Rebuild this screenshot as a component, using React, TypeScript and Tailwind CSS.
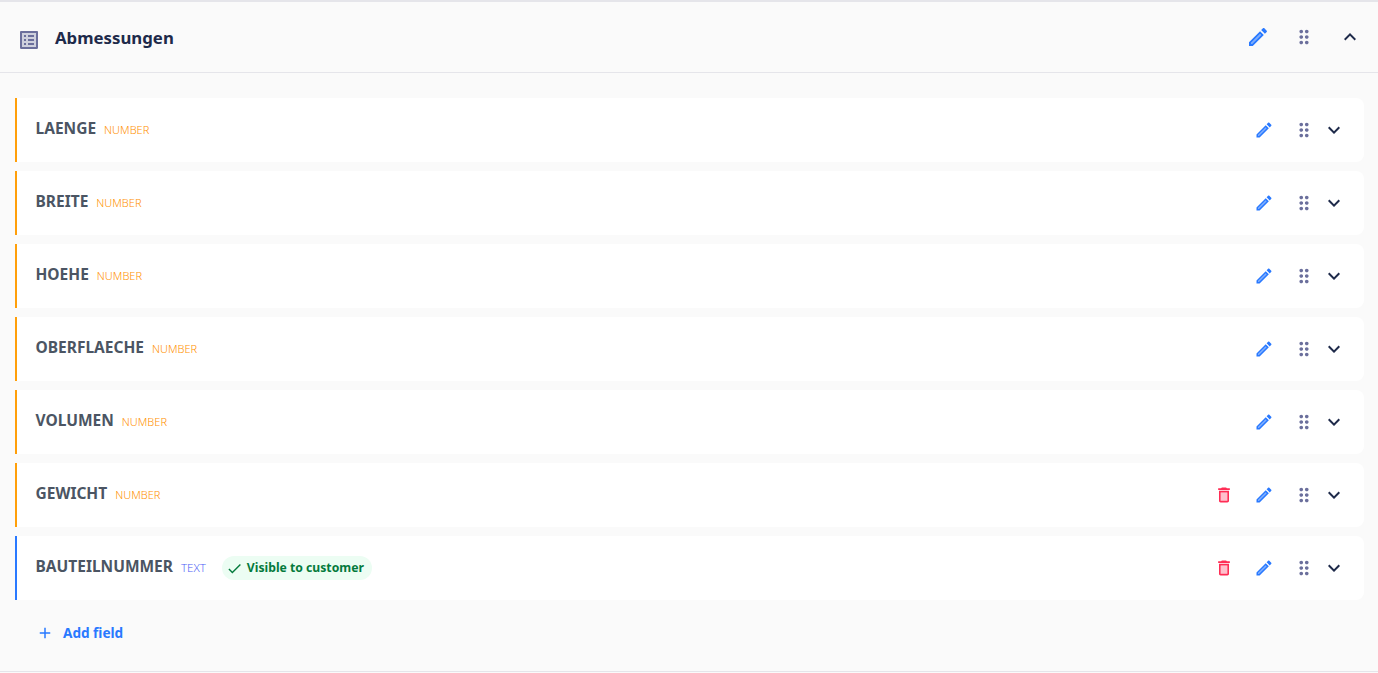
import { MdKeyboardArrowDown, MdKeyboardArrowUp, MdDragIndicator, MdAdd, MdCheck } from "react-icons/md";

const fields = [
  { name: "LAENGE", type: "NUMBER" },
  { name: "BREITE", type: "NUMBER" },
  { name: "HOEHE", type: "NUMBER" },
  { name: "OBERFLAECHE", type: "NUMBER" },
  { name: "VOLUMEN", type: "NUMBER" },
  { name: "GEWICHT", type: "NUMBER", removable: true },
  { name: "BAUTEILNUMMER", type: "TEXT", removable: true, visible: true },
];

function ListIcon() {
  return (
    <svg viewBox="0 0 24 24" className="mt-1.5 w-6 h-6 text-[#6b6f9c]" fill="currentColor">
      <path opacity=".3" d="M5 5v14h14V5H5zm4 12H7v-2h2v2zm0-4H7v-2h2v2zm0-4H7V7h2v2zm8 8h-6v-2h6v2zm0-4h-6v-2h6v2zm0-4h-6V7h6v2z" />
      <path d="M11 7h6v2h-6zm0 4h6v2h-6zm0 4h6v2h-6zM7 7h2v2H7zm0 4h2v2H7zm0 4h2v2H7zM20.1 3H3.9c-.5 0-.9.4-.9.9v16.2c0 .4.4.9.9.9h16.2c.4 0 .9-.5.9-.9V3.9c0-.5-.5-.9-.9-.9zM19 19H5V5h14v14z" />
    </svg>
  );
}

function TrashIcon() {
  return (
    <svg viewBox="0 0 24 24" className="w-5 h-5 text-[#ff2d55]" fill="currentColor">
      <path opacity=".3" d="M8 9h8v10H8z" />
      <path d="M15.5 4l-1-1h-5l-1 1H5v2h14V4zM6 19c0 1.1.9 2 2 2h8c1.1 0 2-.9 2-2V7H6v12zM8 9h8v10H8V9z" />
    </svg>
  );
}

function EditIcon({ className }: { className: string }) {
  return (
    <svg viewBox="0 0 24 24" className={className} fill="currentColor">
      <path opacity=".6" d="M5 18.08V19h.92l9.06-9.06-.92-.92z" />
      <path d="M20.71 7.04c.39-.39.39-1.02 0-1.41l-2.34-2.34c-.2-.2-.45-.29-.71-.29s-.51.09-.7.29l-1.83 1.83 3.75 3.75 1.83-1.83zM3 17.25V21h3.75L17.81 9.94l-3.75-3.75L3 17.25zM5.92 19H5v-.92l9.06-9.06.92.92L5.92 19z" />
    </svg>
  );
}

function FieldRow({ name, type, removable, visible }: { name: string; type: string; removable?: boolean; visible?: boolean }) {
  const isText = type === "TEXT";
  return (
    <div className={`flex h-16 items-center justify-between rounded-r-lg border-l-2 bg-white pl-[18.5px] pr-[18px] ${isText ? "border-[#2979ff]" : "border-[#ff9f0a]"}`}>
      <div className="flex items-center">
        <span className="mb-1 text-[15.5px] font-bold leading-5 text-[#4b5563]">{name}</span>
        <span className={`ml-2 font-light leading-4 ${isText ? "text-[11.5px] text-[#4f5ff5]" : "text-[11px] text-[#ff9100]"}`}>{type}</span>
        {visible && (
          <span className="ml-4 flex h-6 items-center rounded-full bg-[#ecfdf3] pl-1 pr-2 pt-px text-[12.2px] font-bold text-[#047a3c]">
            <MdCheck className="mr-1 h-[17px] w-[17px]" />
            Visible to customer
          </span>
        )}
      </div>
      <div className="flex items-center">
        {removable && (
          <span className="mr-[20px]"><TrashIcon /></span>
        )}
        <EditIcon className="h-5 w-5 text-[#2979ff]" />
        <MdDragIndicator className="ml-[19px] h-[22px] w-[22px] text-[#6b6f9c]" />
        <MdKeyboardArrowDown className="ml-[7px] h-6 w-6 text-[#1e2a4a]" />
      </div>
    </div>
  );
}

export default function App() {
  return (
    <div className="h-[673px] bg-[#fafafa] text-[#1e2a4a]" style={{ fontFamily: '"Noto Sans", "Open Sans", sans-serif' }}>
      <div className="border-t-2 border-[#e5e5ea]">
        <header className="flex h-[71px] items-center justify-between border-b border-[#e5e5ea] pl-[17px] pr-4">
          <div className="flex items-center gap-[14px]">
            <ListIcon />
            <h1 className="mt-0.5 text-[16.8px] font-bold leading-6">Abmessungen</h1>
          </div>
          <div className="flex items-center">
            <EditIcon className="h-6 w-6 text-[#2979ff]" />
            <MdDragIndicator className="ml-[23px] h-[22px] w-[22px] text-[#6b6f9c]" />
            <MdKeyboardArrowUp className="ml-[23px] h-6 w-6" />
          </div>
        </header>
        <div className="flex flex-col gap-[9px] pl-[15px] pr-[14px] pt-[25px]">
          {fields.map((f) => (
            <FieldRow key={f.name} {...f} />
          ))}
        </div>
        <button className="ml-[36px] mt-[21px] flex items-center gap-[9px] text-[13.6px] font-bold leading-6 text-[#2979ff]">
          <MdAdd className="h-[18px] w-[18px]" />
          Add field
        </button>
      </div>
      <div className="mt-[26px] border-t border-[#e5e5ea]" />
    </div>
  );
}
